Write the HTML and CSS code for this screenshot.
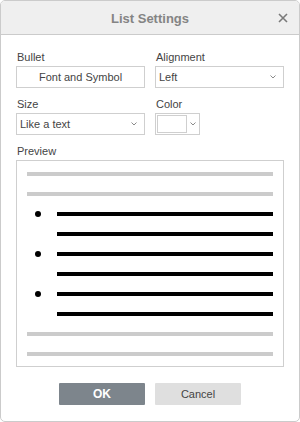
FILE: index.html
```html
<!DOCTYPE html>
<html lang="en">
<head>
  <meta charset="UTF-8" />
  <title>List Settings</title>
  <link rel="stylesheet" href="styles.css">
</head>
<body>
  <div class="dialog">
    <div class="dialog-header">
      <span class="dialog-title">List Settings</span>
      <span class="close-btn">
        <svg width="10" height="10" viewBox="0 0 10 10"><path d="M1 1 L9 9 M9 1 L1 9" stroke="#7a7a7a" stroke-width="1.6"/></svg>
      </span>
    </div>

    <div class="dialog-body">
      <div class="form-grid">
        <div class="field">
          <label>Bullet</label>
          <button class="plain-btn">Font and Symbol</button>
        </div>
        <div class="field">
          <label>Alignment</label>
          <div class="select-box">
            <span>Left</span>
            <svg class="caret" width="6" height="4" viewBox="0 0 6 4"><path d="M0.5 0.5 L3 3 L5.5 0.5" fill="none" stroke="#8a8a8a" stroke-width="1"/></svg>
          </div>
        </div>
        <div class="field">
          <label>Size</label>
          <div class="select-box">
            <span>Like a text</span>
            <svg class="caret" width="6" height="4" viewBox="0 0 6 4"><path d="M0.5 0.5 L3 3 L5.5 0.5" fill="none" stroke="#8a8a8a" stroke-width="1"/></svg>
          </div>
        </div>
        <div class="field">
          <label>Color</label>
          <div class="color-box">
            <span class="swatch"></span>
            <svg class="caret" width="6" height="4" viewBox="0 0 6 4"><path d="M0.5 0.5 L3 3 L5.5 0.5" fill="none" stroke="#8a8a8a" stroke-width="1"/></svg>
          </div>
        </div>
      </div>

      <div class="field preview-field">
        <label>Preview</label>
        <div class="preview-box">
          <div class="line grey"></div>
          <div class="line grey"></div>
          <div class="item"><span class="dot"></span><div class="line black"></div></div>
          <div class="item"><span></span><div class="line black"></div></div>
          <div class="item"><span class="dot"></span><div class="line black"></div></div>
          <div class="item"><span></span><div class="line black"></div></div>
          <div class="item"><span class="dot"></span><div class="line black"></div></div>
          <div class="item"><span></span><div class="line black"></div></div>
          <div class="line grey"></div>
          <div class="line grey"></div>
        </div>
      </div>

      <div class="dialog-footer">
        <button class="ok-btn">OK</button>
        <button class="cancel-btn">Cancel</button>
      </div>
    </div>
  </div>
</body>
</html>
```

FILE: styles.css
```css
* {
  box-sizing: border-box;
  font-family: 'Liberation Sans', Arial, sans-serif;
}

body {
  margin: 0;
  background: #fff;
}

.dialog {
  width: 300px;
  height: 422px;
  border: 1px solid #cbcbcb;
  border-radius: 5px;
  overflow: hidden;
  background: #fff;
}

.dialog-header {
  height: 34px;
  padding-top: 1px;
  background: #efefef;
  border-bottom: 1px solid #cbcbcb;
  display: flex;
  align-items: center;
  justify-content: center;
  position: relative;
}

.dialog-title {
  font-size: 13px;
  font-weight: bold;
  color: #848484;
}

.close-btn {
  position: absolute;
  right: 11px;
  top: 12px;
  display: flex;
}

.dialog-body {
  padding: 16px 15px 0 15px;
}

.form-grid {
  display: grid;
  grid-template-columns: 129px 129px;
  column-gap: 10px;
  row-gap: 10px;
}

.field label {
  display: block;
  font-size: 11px;
  line-height: 13px;
  color: #444;
  margin-bottom: 2px;
  padding-left: 1px;
}

.plain-btn {
  width: 129px;
  height: 22px;
  border: 1px solid #cfcfcf;
  background: #fff;
  font-size: 11px;
  color: #444;
  padding: 0;
}

.select-box {
  height: 22px;
  border: 1px solid #cfcfcf;
  display: flex;
  align-items: center;
  justify-content: space-between;
  padding: 0 7px 0 3px;
  font-size: 11px;
  color: #444;
}

.color-box {
  width: 45px;
  height: 22px;
  border: 1px solid #cfcfcf;
  display: flex;
  align-items: center;
  padding: 1px;
  gap: 3px;
}

.swatch {
  width: 30px;
  height: 18px;
  border: 1px solid #cfcfcf;
  background: #fff;
}

.preview-field {
  margin-top: 10px;
}

.preview-box {
  height: 207px;
  border: 1px solid #cfcfcf;
  padding: 11px 10px 0 10px;
  display: flex;
  flex-direction: column;
  gap: 16px;
}

.line {
  height: 4px;
}

.line.grey {
  background: #cbcbcb;
}

.line.black {
  background: #000;
  flex: 1;
}

.item {
  display: flex;
  align-items: center;
  height: 4px;
}

.item span {
  width: 30px;
  display: flex;
  padding-left: 8px;
}

.item .dot::before {
  content: "";
  width: 6px;
  height: 6px;
  border-radius: 50%;
  background: #000;
}

.dialog-footer {
  display: flex;
  justify-content: center;
  gap: 10px;
  margin-top: 16px;
}

.dialog-footer button {
  width: 86px;
  height: 22px;
  border: none;
  border-radius: 1px;
  font-size: 11px;
  padding: 0;
}

.ok-btn {
  background: #7d858c;
  color: #fff;
  font-weight: bold;
  font-size: 12px !important;
}

.cancel-btn {
  background: #dfdfdf;
  color: #444;
}
```
